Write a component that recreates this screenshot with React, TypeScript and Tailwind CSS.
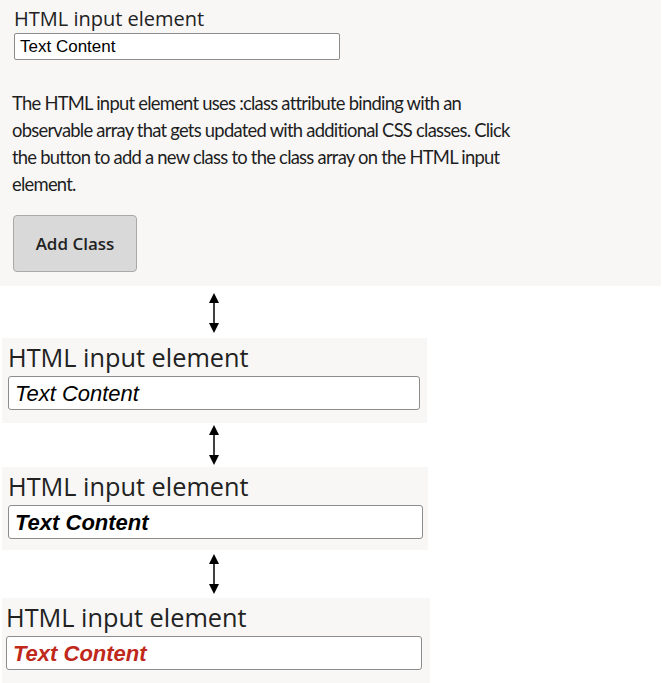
import React from "react";

const uiFont = { fontFamily: '"Open Sans", "Noto Sans", sans-serif' };
const inputFont = { fontFamily: '"Liberation Sans", Arial, sans-serif' };

function Arrow() {
  return (
    <svg width="12" height="40" viewBox="0 0 12 40" aria-hidden="true">
      <path d="M6 0 L11 10 L1 10 Z" fill="#000" />
      <line x1="6" y1="9" x2="6" y2="31" stroke="#000" strokeWidth="1.5" />
      <path d="M6 40 L11 30 L1 30 Z" fill="#000" />
    </svg>
  );
}

function ResultPanel({
  width,
  height,
  inputWidth,
  inputClass,
  pad,
}: {
  width: string;
  height: string;
  inputWidth: string;
  inputClass: string;
  pad: string;
}) {
  return (
    <div className={`ml-[2px] bg-[#f8f7f6] pt-[2px] ${width} ${height} ${pad}`}>
      <div className="text-[25.3px] leading-[34px] text-[#222]" style={uiFont}>
        HTML input element
      </div>
      <div
        className={`mt-[2px] flex h-[34px] items-center rounded-[3px] border border-[#8c8c8c] bg-white pl-[6px] ${inputWidth}`}
      >
        <span className={`text-[22px] italic ${inputClass}`} style={inputFont}>
          Text Content
        </span>
      </div>
    </div>
  );
}

export default function App() {
  return (
    <div className="h-[683px] w-[662px] overflow-hidden bg-white">
      <div className="h-[286px] w-[661px] bg-[#f8f7f6] pl-[14px] pt-[6px]" style={uiFont}>
        <div className="text-[20px] leading-[26px] text-[#222]">HTML input element</div>
        <div className="mt-[1px] flex h-[27px] w-[326px] items-center rounded-[2px] border border-[#8c8c8c] bg-white pl-[5px]">
          <span className="text-[17px] text-black" style={inputFont}>
            Text Content
          </span>
        </div>
        <p
          className="-ml-[2px] mt-[30px] whitespace-nowrap text-[18.4px] leading-[27px] tracking-[-0.75px] text-[#1e1e1e]"
          style={{ fontFamily: 'Lato, "Open Sans", sans-serif' }}
        >
          The HTML input element uses :class attribute binding with an
          <br />
          observable array that gets updated with additional CSS classes. Click
          <br />
          the button to add a new class to the class array on the HTML input
          <br />
          element.
        </p>
        <button
          type="button"
          className="-ml-[1px] mt-[17px] flex h-[57px] w-[124px] items-center justify-center rounded-[4px] border border-[#a9a9a9] bg-[#d9d9d9] text-[17px] font-semibold text-[#222]"
        >
          Add Class
        </button>
      </div>

      <div className="flex h-[52px] w-[428px] items-center justify-center pt-[1px]">
        <Arrow />
      </div>
      <ResultPanel width="w-[425px]" height="h-[85px]" inputWidth="w-[412px]" inputClass="text-black" pad="pl-[6px]" />

      <div className="flex h-[44px] w-[428px] items-center justify-center">
        <Arrow />
      </div>
      <ResultPanel width="w-[426px]" height="h-[83px]" inputWidth="w-[415px]" inputClass="font-bold text-black" pad="pl-[6px]" />

      <div className="flex h-[48px] w-[428px] items-center justify-center">
        <Arrow />
      </div>
      <ResultPanel width="w-[428px]" height="h-[85px]" inputWidth="w-[416px]" inputClass="font-bold text-[#c0281c]" pad="pl-[4px]" />
    </div>
  );
}
